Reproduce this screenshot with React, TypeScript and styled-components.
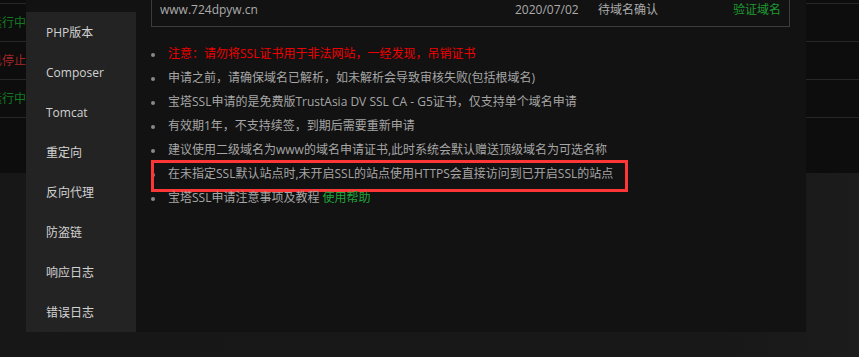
import React from "react";
import styled, { createGlobalStyle } from "styled-components";

const Global = createGlobalStyle`
  html, body { margin: 0; padding: 0; }
  body {
    width: 859px;
    height: 357px;
    overflow: hidden;
    background: #181818;
    font-family: "Open Sans", "Noto Sans CJK SC", sans-serif;
    font-size: 12px;
  }
  * { box-sizing: border-box; }
`;

const Page = styled.div`
  position: relative;
  width: 859px;
  height: 357px;
  background: linear-gradient(90deg, #171717 0%, #181818 85%, #1c1c1c 100%);
`;

const BgTable = styled.div`
  height: 173px;
  background: #0d0d0d;
  padding-top: 3px;
`;

const BgRow = styled.div`
  height: 38px;
  border-top: 1px solid #272727;
  display: flex;
  align-items: center;
  padding-bottom: 1px;
`;

const Status = styled.span<{ $ok: boolean }>`
  margin-left: -10px;
  color: ${(p) => (p.$ok ? "#137a22" : "#a32626")};
  font-size: 12px;
`;

const Modal = styled.div`
  position: absolute;
  left: 26px;
  top: 0;
  width: 780px;
  height: 332px;
  background: #121212;
  display: flex;
  align-items: flex-start;
`;

const Sidebar = styled.nav`
  width: 110px;
  margin-top: 12px;
  background: #232323;
  display: flex;
  flex-direction: column;
`;

const NavItem = styled.div`
  height: 40px;
  display: flex;
  align-items: center;
  padding-left: 20px;
  color: #d2d2d2;
  font-size: 12px;
`;

const Content = styled.div`
  flex: 1;
  padding: 0 16px 0 15px;
`;

const DomainTable = styled.div`
  border: 1px solid #3c3c3c;
  border-top: none;
`;

const DomainRow = styled.div`
  display: grid;
  grid-template-columns: 355px 83px 1fr auto;
  height: 26px;
  padding: 0 8px 6px 8px;
  line-height: 20px;
  color: #ababab;
  font-size: 12px;
`;

const Action = styled.span`
  color: #1e9a31;
  text-align: right;
`;

const Notes = styled.ul`
  list-style: none;
  margin: 15px 0 0 0;
  padding: 0;
`;

const Note = styled.li<{ $warn?: boolean }>`
  position: relative;
  padding-left: 17px;
  line-height: 24px;
  height: 24px;
  color: ${(p) => (p.$warn ? "#f00000" : "#a6a6a6")};
  font-size: 12px;
  white-space: nowrap;
  &::before {
    content: "";
    position: absolute;
    left: 0;
    top: 11px;
    width: 4px;
    height: 4px;
    border-radius: 50%;
    background: #8a8a8a;
  }
`;

const Highlight = styled.span`
  position: absolute;
  left: 0;
  top: -2px;
  width: 477px;
  height: 32px;
  border: 3px solid #ff3636;
  pointer-events: none;
`;

const Link = styled.a`
  color: #20a53a;
  text-decoration: none;
`;

const navItems = ["PHP版本", "Composer", "Tomcat", "重定向", "反向代理", "防盗链", "响应日志", "错误日志"];

export default function App() {
  return (
    <>
      <Global />
      <Page>
        <BgTable>
          <BgRow><Status $ok>运行中</Status></BgRow>
          <BgRow><Status $ok={false}>已停止</Status></BgRow>
          <BgRow><Status $ok>运行中</Status></BgRow>
          <BgRow />
        </BgTable>
        <Modal>
          <Sidebar>
            {navItems.map((n) => (
              <NavItem key={n}>{n}</NavItem>
            ))}
          </Sidebar>
          <Content>
            <DomainTable>
              <DomainRow>
                <span>www.724dpyw.cn</span>
                <span>2020/07/02</span>
                <span>待域名确认</span>
                <Action>验证域名</Action>
              </DomainRow>
            </DomainTable>
            <Notes>
              <Note $warn>注意：请勿将SSL证书用于非法网站，一经发现，吊销证书</Note>
              <Note>申请之前，请确保域名已解析，如未解析会导致审核失败(包括根域名)</Note>
              <Note>宝塔SSL申请的是免费版TrustAsia DV SSL CA - G5证书，仅支持单个域名申请</Note>
              <Note>有效期1年，不支持续签，到期后需要重新申请</Note>
              <Note>建议使用二级域名为www的域名申请证书,此时系统会默认赠送顶级域名为可选名称</Note>
              <Note>
                在未指定SSL默认站点时,未开启SSL的站点使用HTTPS会直接访问到已开启SSL的站点
                <Highlight />
              </Note>
              <Note>
                宝塔SSL申请注意事项及教程 <Link href="#">使用帮助</Link>
              </Note>
            </Notes>
          </Content>
        </Modal>
      </Page>
    </>
  );
}
